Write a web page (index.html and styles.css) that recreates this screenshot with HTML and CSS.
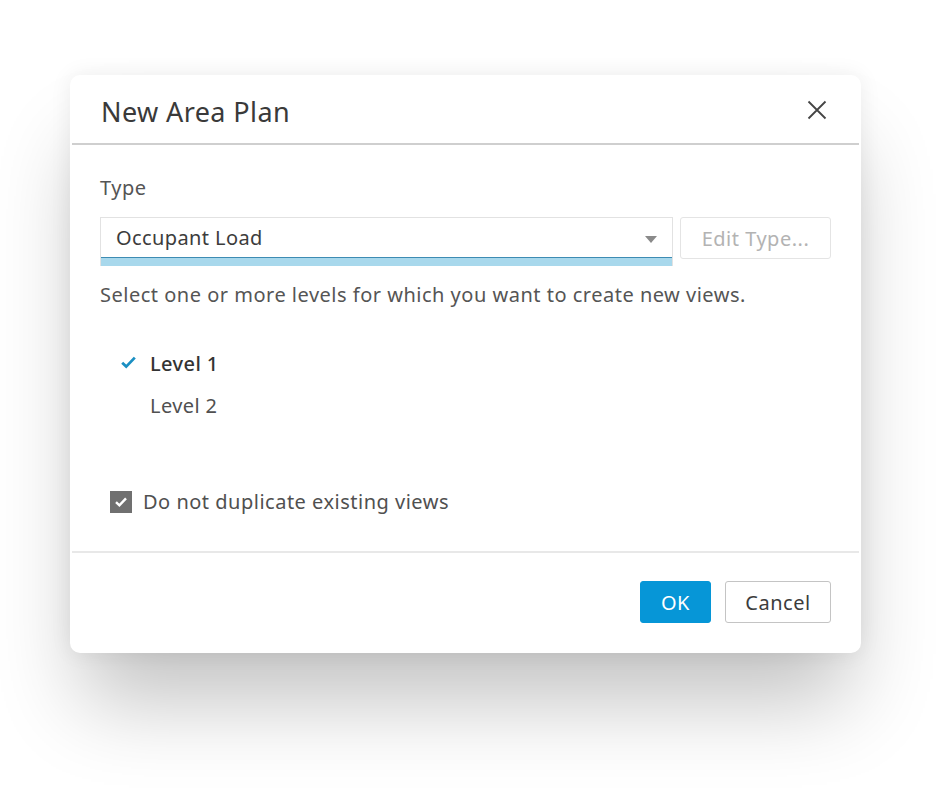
FILE: index.html
```html
<!DOCTYPE html>
<html lang="en">

<head>
    <meta charset="UTF-8">
    <meta name="viewport" content="width=device-width, initial-scale=1.0">
    <title>New Area Plan</title>
    <link rel="stylesheet" href="styles.css">
</head>

<body>
    <main class="stage">
        <section class="dialog">
            <header class="dialog__header">
                <h1>New Area Plan</h1>
                <button class="close" aria-label="Close">
                    <svg width="20" height="20" viewBox="0 0 20 20">
                        <path d="M1.5 1.5 L18.5 18.5 M18.5 1.5 L1.5 18.5" stroke="#444" stroke-width="1.8" fill="none"/>
                    </svg>
                </button>
            </header>
            <div class="dialog__body">
                <label class="field__label">Type</label>
                <div class="type__row">
                    <div class="select">
                        <span>Occupant Load</span>
                        <i class="select__arrow"></i>
                    </div>
                    <button class="btn btn--disabled">Edit Type...</button>
                </div>
                <p class="hint">Select one or more levels for which you want to create new views.</p>
                <ul class="levels">
                    <li class="level level--on">
                        <svg class="tick" width="15" height="13" viewBox="0 0 15 13">
                            <path d="M1.2 6.8 L5.2 10.6 L13.8 1.6" stroke="#1b8fc2" stroke-width="2.8" fill="none"/>
                        </svg>
                        Level 1
                    </li>
                    <li class="level">Level 2</li>
                </ul>
                <label class="check">
                    <span class="check__box">
                        <svg width="14" height="12" viewBox="0 0 14 12">
                            <path d="M2 6.2 L5.4 9.4 L12 2.4" stroke="#fff" stroke-width="2.4" fill="none"/>
                        </svg>
                    </span>
                    Do not duplicate existing views
                </label>
            </div>
            <footer class="dialog__footer">
                <button class="btn btn--primary">OK</button>
                <button class="btn">Cancel</button>
            </footer>
        </section>
    </main>
</body>

</html>
```

FILE: styles.css
```css
* {
    box-sizing: border-box;
}

body {
    margin: 0;
    overflow: hidden;
    background: #fff;
    font-family: "Noto Sans", "Open Sans", sans-serif;
    color: #3c3c3c;
}

.stage {
    height: 789px;
    padding: 75px 0 0 70px;
}

.dialog {
    width: 791px;
    height: 578px;
    background: #fff;
    border-radius: 10px;
    box-shadow: 0 60px 80px -12px rgba(0, 0, 0, 0.24), 0 0 22px rgba(0, 0, 0, 0.07);
    display: flex;
    flex-direction: column;
}

.dialog__header {
    height: 70px;
    margin: 0 2px;
    border-bottom: 2px solid #cfcfcf;
    display: flex;
    align-items: center;
    justify-content: space-between;
    padding: 6px 32px 0 29px;
}

.dialog__header h1 {
    margin: 0;
    font-size: 27px;
    font-weight: 400;
    line-height: 34px;
    color: #3a3a3a;
    letter-spacing: 0.4px;
}

.close {
    border: 0;
    background: none;
    padding: 0;
    width: 20px;
    height: 20px;
    margin-bottom: 4px;
    cursor: pointer;
}

.dialog__body {
    flex: 1;
    padding: 31px 30px 0 30px;
    font-size: 20px;
    letter-spacing: 0.5px;
}

.field__label {
    display: block;
    color: #555;
    line-height: 24px;
}

.type__row {
    display: flex;
    gap: 7px;
    margin-top: 17px;
}

.select {
    width: 573px;
    height: 49px;
    border: 1px solid #e2e2e2;
    border-bottom: 0;
    box-shadow: inset 0 -8px 0 #a8d8ec, inset 0 -9px 0 #3d8cb3;
    display: flex;
    align-items: flex-start;
    justify-content: space-between;
    padding: 8px 15px 0 15px;
    line-height: 24px;
    letter-spacing: 0.4px;
    color: #3c3c3c;
}

.select__arrow {
    width: 0;
    height: 0;
    margin-top: 10px;
    border-left: 6px solid transparent;
    border-right: 6px solid transparent;
    border-top: 7px solid #8a8a8a;
}

.btn {
    font-family: inherit;
    font-size: 20px;
    letter-spacing: 0.5px;
    height: 42px;
    padding: 0 20px;
    border: 1px solid #c4c4c4;
    border-radius: 3px;
    background: #fff;
    color: #3c3c3c;
}

.btn--disabled {
    width: 151px;
    padding: 0;
    color: #b3b3b3;
    border-color: #e4e4e4;
}

.hint {
    margin: 17px 0 0;
    line-height: 24px;
    color: #555;
}

.levels {
    list-style: none;
    margin: 45px 0 0;
    padding: 0 0 0 50px;
}

.level {
    position: relative;
    line-height: 24px;
    height: 42px;
    letter-spacing: 0.4px;
    color: #505050;
}

.level--on {
    font-weight: 500;
    color: #333;
}

.tick {
    position: absolute;
    left: -29px;
    top: 4px;
}

.check {
    display: flex;
    align-items: center;
    gap: 11px;
    margin: 52px 0 0 10px;
    color: #505050;
}

.check__box {
    width: 22px;
    height: 22px;
    background: #707070;
    display: flex;
    align-items: center;
    justify-content: center;
}

.dialog__footer {
    margin: 0 2px;
    height: 102px;
    border-top: 2px solid #e8e8e8;
    display: flex;
    justify-content: flex-end;
    align-items: flex-start;
    gap: 14px;
    padding: 28px 28px 0 0;
}

.btn--primary {
    width: 71px;
    padding: 0;
    background: #0696d7;
    border-color: #0696d7;
    color: #fff;
}

.dialog__footer .btn:last-child {
    width: 106px;
    padding: 0;
}
```
